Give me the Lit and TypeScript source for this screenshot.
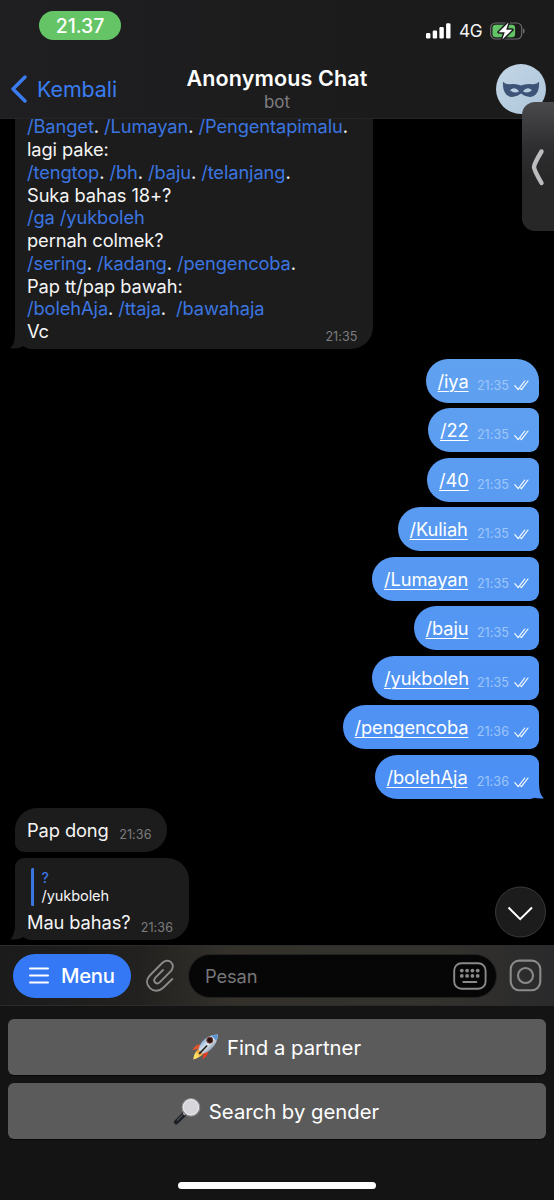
import { LitElement, html, svg, css, nothing } from "lit";
import { customElement, property } from "lit/decorators.js";
import { classMap } from "lit/directives/class-map.js";

interface Outgoing {
  text: string;
  time: string;
  width: number;
}

const outgoing: Outgoing[] = [
  { text: "/iya", time: "21:35", width: 113.5 },
  { text: "/22", time: "21:35", width: 111 },
  { text: "/40", time: "21:35", width: 112 },
  { text: "/Kuliah", time: "21:35", width: 141.5 },
  { text: "/Lumayan", time: "21:35", width: 167 },
  { text: "/baju", time: "21:35", width: 125.5 },
  { text: "/yukboleh", time: "21:35", width: 167 },
  { text: "/pengencoba", time: "21:36", width: 196.5 },
  { text: "/bolehAja", time: "21:36", width: 164.5 },
];

const questionLines = [
  "/Banget. /Lumayan. /Pengentapimalu.",
  "lagi pake:",
  "/tengtop. /bh. /baju. /telanjang.",
  "Suka bahas 18+?",
  "/ga /yukboleh",
  "pernah colmek?",
  "/sering. /kadang. /pengencoba.",
  "Pap tt/pap bawah:",
  "/bolehAja. /ttaja.\u00a0 /bawahaja",
  "Vc",
];

const withCommands = (line: string) =>
  line
    .split(/((?:^|(?<=\s))\/\w+)/)
    .map((part) => (part.startsWith("/") ? html`<span class="cmd">${part}</span>` : part));

const tail = html`<svg class="tail" viewBox="0 0 24 18" width="24" height="18">
  <path d="M5 0C5 9 4 14 0 17.2Q8 18.4 14 14.8Q18 18 24 18L24 0Z" />
</svg>`;

@customElement("status-bar")
class StatusBar extends LitElement {
  static styles = css`
    :host { display: flex; justify-content: space-between; box-sizing: border-box; padding: 11px 29px 0 39px; height: 49px; }
    .clock {
      width: 82px; height: 29px; border-radius: 15px; background: #65c466; color: #fff;
      display: flex; align-items: center; justify-content: center;
      font-size: 19.4px; font-weight: 500; letter-spacing: 0;
    }
    .right { display: flex; align-items: center; height: 39px; gap: 7.5px; color: #f4f4f5; font-size: 17.2px; letter-spacing: -0.2px; }
    svg { display: block; }
  `;
  render() {
    return html`
      <div class="clock">21.37</div>
      <div class="right">
        <svg width="25" height="16" viewBox="0 0 25 16" fill="#fff">
          <rect x="0" y="10" width="4.4" height="5.6" rx="1.3" />
          <rect x="6.7" y="7.4" width="4.4" height="8.2" rx="1.3" />
          <rect x="13.4" y="4" width="4.4" height="11.6" rx="1.3" />
          <rect x="20.1" y="0.2" width="4.4" height="15.4" rx="1.3" />
        </svg>
        <span>4G</span>
        <svg width="35" height="18" viewBox="0 0 35 18">
          <rect x="0.7" y="1" width="31" height="16" rx="4.8" fill="none" stroke="#6c6c6e" stroke-width="1.2" />
          <rect x="2.5" y="2.8" width="22.6" height="12.4" rx="3.2" fill="#62c465" />
          <path d="M33 6.3q1.7 .7 1.7 2.7t-1.7 2.7z" fill="#6c6c6e" />
          <path d="M18.5 .4L8.7 10.2h6l-2.4 7.4L22.2 7.8h-6z" fill="#fff" stroke="#1c1c1e" stroke-width="3" stroke-linejoin="round" paint-order="stroke" />
        </svg>
      </div>
    `;
  }
}

@customElement("chat-header")
class ChatHeader extends LitElement {
  static styles = css`
    :host {
      display: block; flex: none; height: 119px; box-sizing: border-box; position: relative; z-index: 1;
      background: linear-gradient(90deg, #1f1f21, #1b1b1c 70%); border-bottom: 1px solid #252528;
    }
    .bar { display: grid; grid-template-columns: 1fr auto 1fr; height: 68px; padding: 0 8px 0 11px; }
    .back { display: flex; align-items: center; gap: 10px; color: #3b7cf0; font-size: 21.4px; letter-spacing: -0.05px; padding-top: 11px; }
    .middle { text-align: center; padding-top: 14.5px; }
    .title { color: #fff; font-size: 21.5px; line-height: 28px; font-weight: 600; letter-spacing: 0.15px; margin-left: -3px; }
    .subtitle { color: #7f7f83; font-size: 17px; line-height: 20px; margin-left: -3px; }
    .avatar { justify-self: end; padding-top: 14.5px; }
    svg { display: block; }
  `;
  render() {
    return html`
      <status-bar></status-bar>
      <div class="bar">
        <div class="back">
          <svg width="16" height="28" viewBox="0 0 16 28" fill="none" stroke="#3b7cf0" stroke-width="3.4" stroke-linecap="round" stroke-linejoin="round">
            <path d="M14 2L2 14L14 26" />
          </svg>
          <span>Kembali</span>
        </div>
        <div class="middle">
          <div class="title">Anonymous Chat</div>
          <div class="subtitle">bot</div>
        </div>
        <div class="avatar">
          <svg width="50" height="50" viewBox="0 0 50 50">
            <defs>
              <linearGradient id="sky" x1="0" y1="0" x2="1" y2="1">
                <stop offset="0" stop-color="#c3d6e6" /><stop offset="1" stop-color="#adc5da" />
              </linearGradient>
            </defs>
            <circle cx="25" cy="25" r="25" fill="url(#sky)" />
            <path fill="#3d5377" fill-rule="evenodd"
              d="M7 17.8Q9 20.6 13.5 20.2Q20 19.2 25 21.4Q30 19.2 36.5 20.2Q41 20.6 43 17.8Q43.6 26 39.8 30.6Q36.5 33.8 31.5 32.6Q28 31.6 25 29.4Q22 31.6 18.5 32.6Q13.5 33.8 10.2 30.6Q6.4 26 7 17.8ZM14 26.2Q18.5 21.6 23.2 27.2Q18.6 30.2 14 26.2ZM36 26.2Q31.5 21.6 26.8 27.2Q31.4 30.2 36 26.2Z" />
          </svg>
        </div>
      </div>
    `;
  }
}

@customElement("chat-messages")
class ChatMessages extends LitElement {
  static styles = css`
    :host {
      display: flex; flex-direction: column; justify-content: flex-end; flex: 1; min-height: 0; overflow: hidden;
      box-sizing: border-box; padding: 0 15px 5px; background: #000; position: relative;
      font-size: 18.3px; letter-spacing: -0.1px; color: #f5f5f5; gap: 5.5px;
    }
    .bubble { position: relative; z-index: 0; flex: none; box-sizing: border-box; }
    .in { align-self: flex-start; background: #1c1c1d; border-radius: 22px; --tail: #1c1c1d; }
    .tail { position: absolute; z-index: -1; bottom: 0; left: -5px; fill: var(--tail); display: block; }
    .time { font-size: 12.6px; letter-spacing: 0.05px; color: #7c7c7e; }
    .cmd { color: #3b75e0; }
    .question { width: 358px; padding: 30px 12px 6.2px; border-bottom-left-radius: 18px; margin-bottom: 4px; }
    .line { line-height: 22.77px; white-space: pre; }
    .question .time { position: absolute; right: 15.5px; bottom: 5px; }
    .sent { display: flex; flex-direction: column; align-items: flex-end; gap: 5.55px; margin-bottom: 3.5px; }
    .out {
      height: 44px; display: flex; align-items: center; padding: 0 10px 0 12px;
      border-radius: 22px 9px 9px 22px; --tail: #4b8ff5;
      background: linear-gradient(180deg, #60a1f0 360px, #4b8ff5 800px) fixed;
    }
    .first { border-top-right-radius: 22px; }
    .out .label { flex: 1; color: #fff; text-decoration: underline; text-decoration-thickness: 1.2px; text-underline-offset: 2.6px; }
    .out .time { color: #9fc6fa; margin: 9px 5px 0 0; }
    .ticks { margin-top: 10px; display: block; }
    .out .tail { left: auto; right: -5px; transform: scaleX(-1); }
    .short { width: 152px; height: 44px; display: flex; align-items: center; justify-content: space-between; padding: 0 15.5px 0 12px; border-bottom-left-radius: 9px; }
    .short .time { margin-top: 9px; }
    .reply { width: 174px; height: 82.5px; padding: 10px 16px 0 12px; border-radius: 9px 22px 22px 18px; }
    .quote { border-left: 3px solid #3b75e0; margin-left: 3.5px; padding-left: 8px; height: 38px; font-size: 14.6px; line-height: 19px; border-radius: 1.5px; }
    .quote .cmd { font-size: 14px; font-weight: 500; }
    .answer { display: flex; justify-content: space-between; align-items: center; height: 33px; }
    .answer .time { margin-top: 10px; }
    .down { position: absolute; right: 8px; bottom: 7px; width: 51px; height: 52px; }
  `;

  private renderSent(m: Outgoing, i: number) {
    return html`<div class=${classMap({ bubble: true, out: true, first: i === 0 })} style="width:${m.width}px">
      <span class="label">${m.text}</span>
      <span class="time">${m.time}</span>
      <svg class="ticks" width="15" height="11" viewBox="0 0 15 11" fill="none" stroke="#fff" stroke-width="1.15" stroke-linecap="round" stroke-linejoin="round">
        <path d="M.8 5.6L4.2 9.6L10.8 1M6.6 8.8L7.4 9.6L14 1" />
      </svg>
      ${i === outgoing.length - 1 ? tail : nothing}
    </div>`;
  }

  render() {
    return html`
      <div class="bubble in question">
        ${questionLines.map((line) => html`<div class="line">${withCommands(line)}</div>`)}
        <span class="time">21:35</span>
        ${tail}
      </div>
      <div class="sent">${outgoing.map((m, i) => this.renderSent(m, i))}</div>
      <div class="bubble in short"><span>Pap dong</span><span class="time">21:36</span></div>
      <div class="bubble in reply">
        <div class="quote"><div class="cmd">?</div><div>/yukboleh</div></div>
        <div class="answer"><span>Mau bahas?</span><span class="time">21:36</span></div>
        ${tail}
      </div>
      <svg class="down" viewBox="0 0 51 52" fill="none">
        <circle cx="25.5" cy="26" r="25" fill="#1c1c1d" stroke="#39393b" />
        <path d="M13.5 21.5L25.2 33.1L37 21.5" stroke="#fff" stroke-width="2" />
      </svg>
    `;
  }
}

@customElement("chat-composer")
class ChatComposer extends LitElement {
  static styles = css`
    :host {
      flex: none; height: 61px; box-sizing: border-box; display: flex; align-items: center; padding: 0 12px 0 13px;
      background: linear-gradient(90deg, #1b1b1c, #22211f 25%, #34312b 42%, #34322d 78%, #2a2a2c);
      border-top: 1px solid #2c2c2d; border-bottom: 1px solid #2c2b2a;
    }
    .menu {
      width: 118px; height: 44px; border-radius: 22px; background: #3478f6; color: #fff; box-sizing: border-box;
      display: flex; align-items: center; gap: 12px; padding-left: 16px; font-size: 20.3px; font-weight: 500; letter-spacing: -0.3px;
    }
    .clip { margin: 0 14px 0 15px; }
    .field {
      flex: 1; height: 44px; border-radius: 22px; background: #060606; border: 1px solid #222; box-sizing: border-box;
      display: flex; align-items: center; justify-content: space-between; padding: 0 9px 0 16px;
      color: #767678; font-size: 18.3px; letter-spacing: -0.1px; margin-right: 12px;
    }
    svg { display: block; flex: none; }
  `;
  render() {
    const dots = [0, 1, 2, 3].flatMap((c) =>
      [0, 1].map((r) => svg`<circle cx=${8.8 + c * 5.3} cy=${8.6 + r * 5.3} r="1.9" />`)
    );
    return html`
      <div class="menu">
        <svg width="20" height="17" viewBox="0 0 20 17" stroke="#fff" stroke-width="2" stroke-linecap="round">
          <path d="M1 1.5H19M1 8.5H19M1 15.5H19" />
        </svg>
        <span>Menu</span>
      </div>
      <svg class="clip" width="28" height="33" viewBox="0 0 28 33" fill="none" stroke="#8a8a8b" stroke-width="1.9" stroke-linecap="round" stroke-linejoin="round">
        <path d="M26.3 20L17.2 28.7C13 32.8 7.5 32.6 3.7 28.8C0 25 .2 20.3 3.8 16.5L16.2 4C19 1.2 22.9 1 25.2 3.3C27.6 5.7 27.3 9.6 24.6 12.4L13.9 23.2C12.4 24.7 10.6 24.9 9.2 23.5C7.8 22.1 8 20.2 9.4 18.7L17 11" />
      </svg>
      <div class="field">
        <span>Pesan</span>
        <svg width="34" height="28" viewBox="0 0 34 28" fill="#8a8a8b">
          <rect x="1.2" y="1.2" width="31.4" height="25.6" rx="7.2" fill="none" stroke="#8a8a8b" stroke-width="1.9" />
          ${dots}
          <rect x="9.3" y="18.9" width="15" height="2.1" rx="1" />
        </svg>
      </div>
      <svg width="33" height="33" viewBox="0 0 33 33" fill="none" stroke="#8a8a8b" stroke-width="2.1">
        <rect x="1.7" y="1.6" width="29.6" height="29.6" rx="8.6" />
        <circle cx="16.5" cy="16.5" r="7.5" />
      </svg>
    `;
  }
}

@customElement("reply-keyboard")
class ReplyKeyboard extends LitElement {
  static styles = css`
    :host {
      flex: none; height: 194px; box-sizing: border-box; background: #141414; padding: 13px 8px 11px;
      display: flex; flex-direction: column; gap: 8px;
    }
    .key {
      height: 56px; border-radius: 6px; background: #5b5b5b; box-shadow: 0 1px 0 #080808; color: #fff;
      display: flex; align-items: center; justify-content: center; gap: 8px; font-size: 20.3px; letter-spacing: 0;
      padding-right: 2px; box-sizing: border-box;
    }
    .home { width: 198px; height: 7px; border-radius: 4px; background: #fff; margin: auto auto 0; }
    svg { display: block; }
  `;
  @property({ type: String }) first = "Find a partner";
  @property({ type: String }) second = "Search by gender";
  render() {
    return html`
      <div class="key">
        <svg width="28" height="28" viewBox="0 0 28 28">
          <defs>
            <linearGradient id="hull" x1="0" y1="0" x2="1" y2="1">
              <stop offset="0.15" stop-color="#5d8fcb" /><stop offset="0.5" stop-color="#e4eaf0" /><stop offset="0.85" stop-color="#56718f" />
            </linearGradient>
            <linearGradient id="flame" x1="1" y1="0" x2="0" y2="1">
              <stop offset="0.2" stop-color="#f0862e" /><stop offset="0.65" stop-color="#ffe066" />
            </linearGradient>
          </defs>
          <path d="M9 11.2Q4.5 11 1.2 17.6Q5 15.4 9.4 16.4Z" fill="#e2542b" />
          <path d="M17 18.6Q17.4 23.2 11.4 26.4Q13 22.4 12 18.6Z" fill="#dc4127" />
          <path d="M8 15.8Q3.4 18.6 2.2 26.4Q9 24.6 12.4 20.4Z" fill="url(#flame)" />
          <path d="M27 1.4Q16.6 1.6 10.6 9.2Q8.2 12.8 7.4 16.6L11.8 20.8Q16.6 19.6 20 16.4Q26.6 10.2 27 1.4Z" fill="url(#hull)" />
          <path d="M27 1.4Q23.4 1.4 20.4 2.8L25.4 7.8Q26.8 5 27 1.4Z" fill="#5f94d2" />
          <circle cx="18.8" cy="7.2" r="3" fill="#2a1413" stroke="#73392f" stroke-width="1" />
          <path d="M15.6 13L8.6 20.4" stroke="#272728" stroke-width="1.8" stroke-linecap="round" />
        </svg>
        <span>${this.first}</span>
      </div>
      <div class="key">
        <svg width="28" height="28" viewBox="0 0 28 28">
          <path d="M11.4 17L3.2 25.2" stroke="#1c1f24" stroke-width="4.6" stroke-linecap="round" />
          <path d="M9.4 18.2L4.2 23.2" stroke="#697078" stroke-width="1" stroke-linecap="round" />
          <path d="M12.4 15.8L10.6 17.6" stroke="#a9adb1" stroke-width="2.6" />
          <circle cx="17.9" cy="10.3" r="8.8" fill="#cfcfd3" stroke="#8f8f93" stroke-width="1.2" />
          <circle cx="17.9" cy="10.3" r="7.6" fill="#d6d6da" stroke="#eeeef0" stroke-width=".9" />
        </svg>
        <span>${this.second}</span>
      </div>
      <div class="home"></div>
    `;
  }
}

@customElement("app-root")
class AppRoot extends LitElement {
  static styles = css`
    :host {
      display: flex; flex-direction: column; height: 1200px; width: 554px; position: relative; overflow: hidden;
      background: #000; font-family: Inter, "Liberation Sans", sans-serif;
    }
    .handle {
      position: absolute; z-index: 2; top: 102px; right: 0; width: 32px; height: 129px; border-radius: 13px 0 0 13px;
      background: linear-gradient(180deg, #4a4a4c, #2e2e30 35%, #272728 60%); display: block;
    }
  `;
  render() {
    return html`
      <chat-header></chat-header>
      <chat-messages></chat-messages>
      <chat-composer></chat-composer>
      <reply-keyboard></reply-keyboard>
      <svg class="handle" viewBox="0 0 32 129" fill="none">
        <path d="M19.5 49.5Q12 62 12 65Q12 68 19.5 81" stroke="#bcbcbe" stroke-width="4.4" stroke-linecap="round" />
      </svg>
    `;
  }
}
